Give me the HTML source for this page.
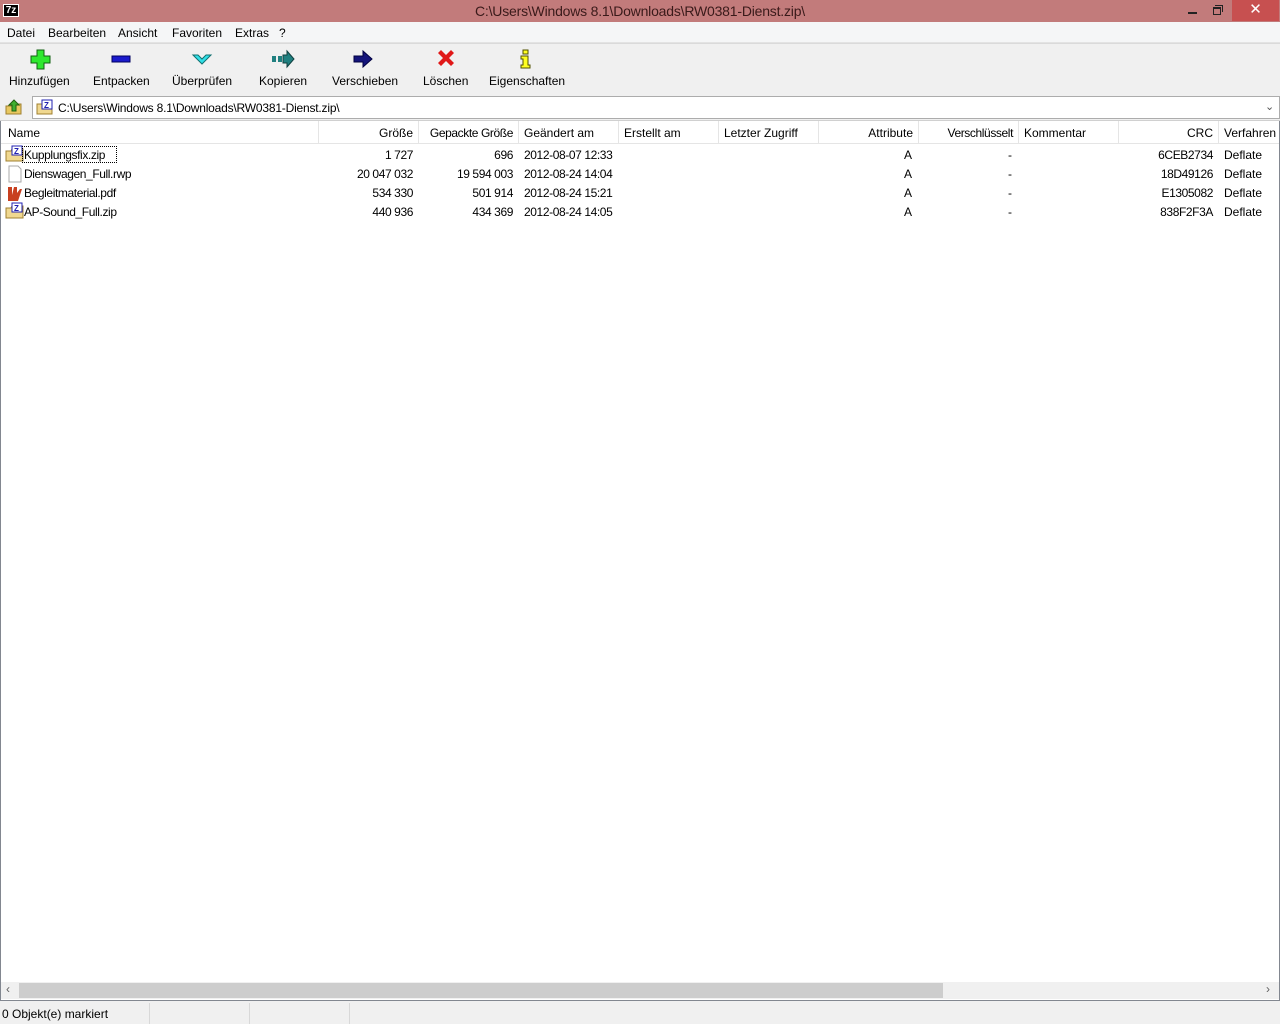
<!DOCTYPE html>
<html><head><meta charset="utf-8"><style>
*{margin:0;padding:0;box-sizing:border-box}
body{width:1280px;height:1024px;position:relative;background:#fff;font-family:"Liberation Sans",sans-serif;font-size:12px;color:#000;overflow:hidden}
.a{position:absolute;white-space:nowrap}
.r{text-align:right}
.n{letter-spacing:-0.4px}
</style></head><body>
<div class="a" style="left:0;top:0;width:1280px;height:22px;background:#c27b7b"></div>
<div class="a" style="left:3px;top:4px;width:16px;height:13px;background:#000;border:1px solid #fff;color:#fff;font-size:10px;font-weight:bold;line-height:11px;text-align:center">7z</div>
<div class="a" style="left:0;top:3px;width:1280px;text-align:center;font-size:14px;color:#3a1a1a;letter-spacing:-0.2px">C:\Users\Windows 8.1\Downloads\RW0381-Dienst.zip\</div>
<div class="a" style="left:1188px;top:12px;width:9px;height:2px;background:#222"></div>
<div class="a" style="left:1213px;top:7px;width:8px;height:8px;border:1px solid #222;border-top-width:2px"></div>
<div class="a" style="left:1215px;top:5px;width:8px;height:7px;border-top:1px solid #222;border-right:1px solid #222"></div>
<div class="a" style="left:1232px;top:0;width:47px;height:21px;background:#c75050;color:#fff;text-align:center;font-size:15px;line-height:20px">✕</div>
<div class="a" style="left:0;top:22px;width:1280px;height:21px;background:#f5f6f7;border-bottom:1px solid #e3e3e3"></div>
<div class="a" style="left:7px;top:26px">Datei</div>
<div class="a" style="left:48px;top:26px">Bearbeiten</div>
<div class="a" style="left:118px;top:26px">Ansicht</div>
<div class="a" style="left:172px;top:26px">Favoriten</div>
<div class="a" style="left:235px;top:26px">Extras</div>
<div class="a" style="left:279px;top:26px">?</div>
<div class="a" style="left:0;top:43px;width:1280px;height:52px;background:#f0f0f0;border-top:1px solid #dadada"></div>
<svg class="a" style="left:0;top:46px" width="580" height="26">
<path d="M37 4h7v6h6v7h-6v6h-7v-6h-6v-7h6z" fill="#2ee82e" stroke="#106010"/>
<rect x="112" y="10" width="18" height="6" fill="#1a1acc" stroke="#000060"/>
<path d="M193 9l9 9 9-9h-5l-4 4-4-4z" fill="#30e0e8" stroke="#107070"/>
<rect x="272" y="10" width="4" height="6" fill="#208080"/><rect x="278" y="10" width="4" height="6" fill="#208080"/><path d="M283 9h4v-4l7 8-7 8v-4h-4z" fill="#208080" stroke="#104040"/>
<path d="M354 10h9v-5l9 8-9 8v-5h-9z" fill="#14147a" stroke="#000040"/>
<path d="M438 7l3-3 5 5 5-5 3 3-5 5 5 5-3 3-5-5-5 5-3-3 5-5z" fill="#e01818"/>
<path d="M523 4h5v4h-5z M521 10h7v9h2v3h-9v-3h2v-6h-2z" fill="#ffff20" stroke="#505000"/>
</svg>
<div class="a" style="left:9px;top:74px">Hinzufügen</div>
<div class="a" style="left:93px;top:74px">Entpacken</div>
<div class="a" style="left:172px;top:74px">Überprüfen</div>
<div class="a" style="left:259px;top:74px">Kopieren</div>
<div class="a" style="left:332px;top:74px">Verschieben</div>
<div class="a" style="left:423px;top:74px">Löschen</div>
<div class="a" style="left:489px;top:74px">Eigenschaften</div>
<div class="a" style="left:0;top:95px;width:1280px;height:25px;background:#f0f0f0"></div>
<svg class="a" style="left:4px;top:98px" width="20" height="18"><path d="M2 8h6l1-2h8v10H2z" fill="#e8c860" stroke="#a08030"/><path d="M10 2l5 5h-3v6h-4V7H5z" fill="#40b030" stroke="#206010"/></svg>
<div class="a" style="left:32px;top:96px;width:1248px;height:23px;background:#fff;border:1px solid #acacac"></div>
<svg class="a" style="left:36px;top:99px" width="18" height="16"><path d="M1 5h5l1-2h9v12H1z" fill="#f0d890" stroke="#a08030"/><rect x="6" y="1" width="10" height="9" fill="#fff" stroke="#2020b0"/><text x="8" y="9" font-size="8" font-weight="bold" fill="#2020b0" font-family="Liberation Sans">Z</text></svg>
<div class="a" style="left:58px;top:101px;letter-spacing:-0.2px">C:\Users\Windows 8.1\Downloads\RW0381-Dienst.zip\</div>
<div class="a" style="left:1265px;top:100px;font-size:11px;color:#555">⌄</div>
<div class="a" style="left:0;top:120px;width:1280px;height:1px;background:#d0d0d0"></div>
<div class="a" style="left:0;top:121px;width:1280px;height:880px;border-left:1px solid #828790;border-right:1px solid #828790"></div>
<div class="a" style="left:1px;top:121px;width:1278px;height:23px;border-bottom:1px solid #e5e5e5"></div>
<div class="a" style="left:318px;top:121px;width:1px;height:23px;background:#e5e5e5"></div>
<div class="a" style="left:418px;top:121px;width:1px;height:23px;background:#e5e5e5"></div>
<div class="a" style="left:518px;top:121px;width:1px;height:23px;background:#e5e5e5"></div>
<div class="a" style="left:618px;top:121px;width:1px;height:23px;background:#e5e5e5"></div>
<div class="a" style="left:718px;top:121px;width:1px;height:23px;background:#e5e5e5"></div>
<div class="a" style="left:818px;top:121px;width:1px;height:23px;background:#e5e5e5"></div>
<div class="a" style="left:918px;top:121px;width:1px;height:23px;background:#e5e5e5"></div>
<div class="a" style="left:1018px;top:121px;width:1px;height:23px;background:#e5e5e5"></div>
<div class="a" style="left:1118px;top:121px;width:1px;height:23px;background:#e5e5e5"></div>
<div class="a" style="left:1218px;top:121px;width:1px;height:23px;background:#e5e5e5"></div>
<div class="a" style="left:8px;top:126px">Name</div>
<div class="a r" style="left:318px;top:126px;width:95px">Größe</div>
<div class="a r n" style="left:418px;top:126px;width:95px">Gepackte Größe</div>
<div class="a" style="left:524px;top:126px">Geändert am</div>
<div class="a" style="left:624px;top:126px">Erstellt am</div>
<div class="a" style="left:724px;top:126px">Letzter Zugriff</div>
<div class="a r" style="left:818px;top:126px;width:95px">Attribute</div>
<div class="a r n" style="left:918px;top:126px;width:95px">Verschlüsselt</div>
<div class="a" style="left:1024px;top:126px">Kommentar</div>
<div class="a r" style="left:1118px;top:126px;width:95px">CRC</div>
<div class="a" style="left:1224px;top:126px">Verfahren</div>
<svg class="a" style="left:5px;top:145px" width="20" height="80">
<g><path d="M1 6h5l1-2h11v12H1z" fill="#f0d890" stroke="#a08030"/><rect x="7" y="1" width="10" height="9" fill="#fff" stroke="#2020b0"/><text x="9" y="9" font-size="8" font-weight="bold" fill="#2020b0" font-family="Liberation Sans">Z</text></g>
<path d="M4 21h9l3 3v13H4z" fill="#fff" stroke="#aaa"/>
<path d="M3 42h4v8l2-8h3v6l3-4h2l-4 12H3z" fill="#c84020"/>
<g transform="translate(0,57)"><path d="M1 6h5l1-2h11v12H1z" fill="#f0d890" stroke="#a08030"/><rect x="7" y="1" width="10" height="9" fill="#fff" stroke="#2020b0"/><text x="9" y="9" font-size="8" font-weight="bold" fill="#2020b0" font-family="Liberation Sans">Z</text></g>
</svg>
<div class="a" style="left:22px;top:146px;width:95px;height:17px;border:1px dotted #000"></div>
<div class="a n" style="left:24px;top:148px">Kupplungsfix.zip</div>
<div class="a n" style="left:24px;top:167px">Dienswagen_Full.rwp</div>
<div class="a n" style="left:24px;top:186px">Begleitmaterial.pdf</div>
<div class="a n" style="left:24px;top:205px">AP-Sound_Full.zip</div>
<div class="a r n" style="left:318px;top:146px;width:95px;line-height:19px">1 727<br>20 047 032<br>534 330<br>440 936</div>
<div class="a r n" style="left:418px;top:146px;width:95px;line-height:19px">696<br>19 594 003<br>501 914<br>434 369</div>
<div class="a n" style="left:524px;top:146px;line-height:19px">2012-08-07 12:33<br>2012-08-24 14:04<br>2012-08-24 15:21<br>2012-08-24 14:05</div>
<div class="a" style="left:904px;top:146px;line-height:19px">A<br>A<br>A<br>A</div>
<div class="a" style="left:1008px;top:146px;line-height:19px">-<br>-<br>-<br>-</div>
<div class="a r n" style="left:1118px;top:146px;width:95px;line-height:19px">6CEB2734<br>18D49126<br>E1305082<br>838F2F3A</div>
<div class="a" style="left:1224px;top:146px;line-height:19px">Deflate<br>Deflate<br>Deflate<br>Deflate</div>
<div class="a" style="left:1px;top:982px;width:1278px;height:17px;background:#f0f0f0"></div>
<div class="a" style="left:19px;top:983px;width:924px;height:15px;background:#cdcdcd"></div>
<div class="a" style="left:6px;top:982px;color:#606060;font-size:12px">‹</div>
<div class="a" style="left:1266px;top:982px;color:#606060;font-size:12px">›</div>
<div class="a" style="left:0;top:1000px;width:1280px;height:1px;background:#828790"></div>
<div class="a" style="left:0;top:1001px;width:1280px;height:23px;background:#f0f0f0"></div>
<div class="a" style="left:149px;top:1003px;width:1px;height:21px;background:#d8d8d8"></div>
<div class="a" style="left:249px;top:1003px;width:1px;height:21px;background:#d8d8d8"></div>
<div class="a" style="left:349px;top:1003px;width:1px;height:21px;background:#d8d8d8"></div>
<div class="a" style="left:2px;top:1007px">0 Objekt(e) markiert</div>
</body></html>
